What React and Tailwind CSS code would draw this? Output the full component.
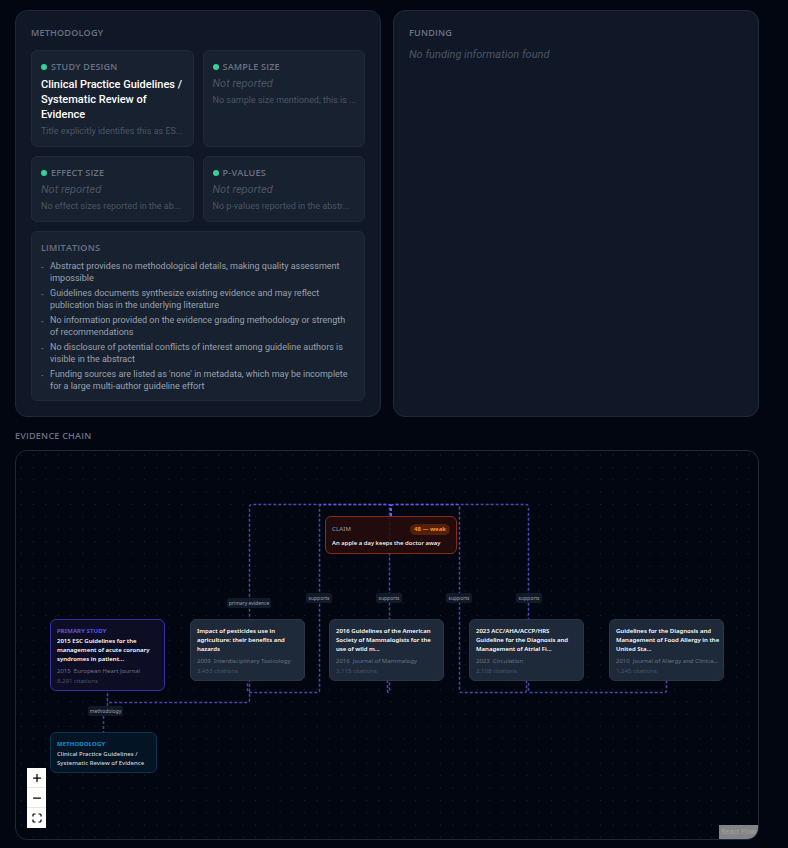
import { Plus, Minus } from "lucide-react";

const stats = [
  { label: "STUDY DESIGN", value: "Clinical Practice Guidelines / Systematic Review of Evidence", note: "Title explicitly identifies this as ES..." },
  { label: "SAMPLE SIZE", note: "No sample size mentioned; this is ..." },
  { label: "EFFECT SIZE", note: "No effect sizes reported in the ab..." },
  { label: "P-VALUES", note: "No p-values reported in the abstr..." },
];

const limitations = [
  "Abstract provides no methodological details, making quality assessment impossible",
  "Guidelines documents synthesize existing evidence and may reflect publication bias in the underlying literature",
  "No information provided on the evidence grading methodology or strength of recommendations",
  "No disclosure of potential conflicts of interest among guideline authors is visible in the abstract",
  "Funding sources are listed as 'none' in metadata, which may be incomplete for a large multi-author guideline effort",
];

const papers = [
  { place: "left-[174px]", title: "Impact of pesticides use in\nagriculture: their benefits and\nhazards", year: "2009", journal: "Interdisciplinary Toxicology", cites: "3,453" },
  { place: "left-[313px]", title: "2016 Guidelines of the American\nSociety of Mammalogists for the\nuse of wild m...", year: "2016", journal: "Journal of Mammalogy", cites: "3,115" },
  { place: "left-[453px]", title: "2023 ACC/AHA/ACCP/HRS\nGuideline for the Diagnosis and\nManagement of Atrial Fi...", year: "2023", journal: "Circulation", cites: "2,108" },
  { place: "left-[593px]", title: "Guidelines for the Diagnosis and\nManagement of Food Allergy in the\nUnited Sta...", year: "2010", journal: "Journal of Allergy and Clinica...", cites: "1,245" },
];

const edgeLabels = [
  { text: "primary evidence", place: "left-[211px] top-[147px] w-[44px]" },
  { text: "supports", place: "left-[290px] top-[142px] w-[26px]" },
  { text: "supports", place: "left-[360px] top-[142px] w-[26px]" },
  { text: "supports", place: "left-[430px] top-[142px] w-[26px]" },
  { text: "supports", place: "left-[500px] top-[142px] w-[26px]" },
  { text: "methodology", place: "left-[72px] top-[255px] w-[35px]" },
];

function Heading({ children }) {
  return <h2 className="font-['Open_Sans',sans-serif] text-[9px] leading-[13px] font-semibold tracking-wide text-gray-500">{children}</h2>;
}

function Stat({ label, value, note }) {
  return (
    <div className="min-w-0 rounded-md border border-gray-800 bg-[#18212f] px-[9px] pt-[9px] pb-2">
      <div className="flex items-center gap-1">
        <span className="size-[6px] rounded-full bg-[#34d399]" />
        <Heading>{label}</Heading>
      </div>
      {value ? (
        <p className="mt-1 text-[11px] leading-[15px] font-medium text-white">{value}</p>
      ) : (
        <p className="mt-1 text-[11px] leading-[14px] text-gray-600 italic">Not reported</p>
      )}
      <p className="mt-[3px] text-[9px] leading-[13px] whitespace-nowrap text-gray-600">{note}</p>
    </div>
  );
}

function Edges() {
  return (
    <svg className="absolute inset-0 size-full" fill="none">
      <defs>
        <pattern id="dots" x="-1" y="-2" width="12.33" height="12.33" patternUnits="userSpaceOnUse">
          <circle cx="6.2" cy="6.2" r="0.5" fill="#29313f" />
        </pattern>
      </defs>
      <rect width="100%" height="100%" fill="url(#dots)" />
      <g stroke="#6366f1" strokeOpacity="0.7" strokeWidth="1.5" strokeDasharray="3 2">
        <path d="M375 65V56Q375 53.500 372 53.500H236Q233.500 53.500 233.500 56V249Q233.500 251.500 231 251.500H94Q91.500 251.500 91.500 249V240" />
        <path d="M375 65V56Q375 53.500 372 53.500H306Q303.500 53.500 303.500 56V239Q303.500 241.500 301 241.500H234Q231.500 241.500 231.500 239V230" />
        <path d="M375 65V56Q375 53.500 374 53.500Q373.500 53.500 373.500 55V240Q373.500 241.500 372.500 241.500Q371.500 241.500 371.500 240V230" />
        <path d="M375 65V56Q375 53.500 378 53.500H441Q443.500 53.500 443.500 56V239Q443.500 241.500 446 241.500H508Q510.500 241.500 510.500 239V230" />
        <path d="M375 65V56Q375 53.500 378 53.500H510Q512.500 53.500 512.500 56V239Q512.500 241.500 515 241.500H648Q650.500 241.500 650.500 239V230" />
      </g>
      <path d="M91.500 252V257Q91.500 260 89 260Q87.500 260 87.500 263V281" stroke="#1d5580" strokeWidth="1.5" strokeDasharray="3 2" />
    </svg>
  );
}

function Meta({ year, journal, cites }) {
  return (
    <>
      <p className="mt-[3px] text-[6px] leading-[9px] whitespace-nowrap text-gray-500">
        {year}&nbsp; {journal}
      </p>
      <p className="mt-px text-[6px] leading-[9px] text-gray-600">{cites} citations</p>
    </>
  );
}

const controlButton = "flex h-[20px] w-full items-center justify-center bg-white text-black";

export default function App() {
  return (
    <main className="min-h-screen bg-[#020610] pt-[10px] pr-[29px] pb-2 pl-[15px] font-['Roboto',sans-serif]">
      <div className="grid grid-cols-2 gap-3">
        <section className="rounded-xl border border-gray-800 bg-gray-900 p-[15px]">
          <Heading>METHODOLOGY</Heading>
          <div className="mt-[11px] grid grid-cols-2 gap-[9px]">
            {stats.map((s) => (
              <Stat key={s.label} {...s} />
            ))}
            <div className="col-span-2 rounded-md border border-gray-800 bg-[#18212f] px-[9px] pt-[9px] pb-2">
              <Heading>LIMITATIONS</Heading>
              <ul className="mt-[6px] space-y-[3px] text-[9px] leading-[12px] text-gray-400">
                {limitations.map((l) => (
                  <li key={l} className="flex gap-[5px]">
                    <span className="mt-0.5 w-1 shrink-0 font-bold text-gray-500">·</span>
                    <span>{l}</span>
                  </li>
                ))}
              </ul>
            </div>
          </div>
        </section>
        <section className="rounded-xl border border-gray-800 bg-gray-900 p-[15px]">
          <Heading>FUNDING</Heading>
          <p className="mt-[9px] text-[11px] leading-[14px] text-gray-600 italic">No funding information found</p>
        </section>
      </div>

      <section className="mt-3">
        <Heading>EVIDENCE CHAIN</Heading>
        <div className="relative mt-2 h-[390px] overflow-hidden rounded-xl border border-gray-800 font-['Noto_Sans',sans-serif]">
          <Edges />

          {edgeLabels.map((e, i) => (
            <span key={i} className={`absolute h-[10px] rounded-xs bg-[#111a28] text-center text-[5px] leading-[10px] whitespace-nowrap text-gray-400 ${e.place}`}>
              {e.text}
            </span>
          ))}

          <article className="absolute top-[65px] left-[309px] w-[132px] rounded-md border border-[#8b2c12] bg-[#270d0c]/85 px-[6px] pt-[7px] pb-[5px]">
            <div className="flex items-center justify-between">
              <span className="text-[6px] leading-[11px] tracking-wide text-gray-400">CLAIM</span>
              <span className="rounded-full bg-[#541e0b] px-1 text-[6px] leading-[11px] font-bold text-[#f59331]">48 — weak</span>
            </div>
            <p className="mt-1 text-[6px] leading-[9px] font-medium text-white">An apple a day keeps the doctor away</p>
          </article>

          <article className="absolute top-[168px] left-[34px] w-[115px] rounded-md border border-[#3730a3] bg-[#0d0d26] px-[6px] pt-[7px] pb-1">
            <p className="text-[6px] leading-[9px] font-semibold tracking-wide text-indigo-500">PRIMARY STUDY</p>
            <p className="mt-px text-[6px] leading-[9px] font-semibold text-white">2015 ESC Guidelines for the management of acute coronary syndromes in patient...</p>
            <Meta year="2015" journal="European Heart Journal" cites="8,291" />
          </article>

          {papers.map((p) => (
            <article key={p.year} className={`absolute top-[168px] w-[115px] rounded-md border border-[#2c3645] bg-gray-800 pt-[7px] pr-[3px] pb-1 pl-[6px] ${p.place}`}>
              <p className="text-[6px] leading-[9px] font-semibold whitespace-pre-line text-white">{p.title}</p>
              <Meta {...p} />
            </article>
          ))}

          <article className="absolute top-[281px] left-[34px] w-[107px] rounded-md border border-[#0c3350] bg-[#031425] px-[6px] pt-[7px] pb-1">
            <p className="text-[6px] leading-[9px] font-semibold tracking-wide text-sky-500">METHODOLOGY</p>
            <p className="mt-px text-[6px] leading-[9px] font-medium text-gray-300">Clinical Practice Guidelines / Systematic Review of Evidence</p>
          </article>

          <div className="absolute bottom-[11px] left-[11px] w-[19px] divide-y divide-gray-200">
            <button aria-label="Zoom in" className={controlButton}>
              <Plus size={12} strokeWidth={2.5} />
            </button>
            <button aria-label="Zoom out" className={controlButton}>
              <Minus size={12} strokeWidth={2.5} />
            </button>
            <button aria-label="Fit view" className={controlButton}>
              <svg width="10" height="10" viewBox="0 0 10 10" fill="none" stroke="currentColor" strokeWidth="1.2">
                <path d="M1 3.500V2Q1 1 2 1H3.500M6.500 1H8Q9 1 9 2V3.500M9 6.500V8Q9 9 8 9H6.500M3.500 9H2Q1 9 1 8V6.500" />
              </svg>
            </button>
          </div>
          <a href="#attribution" className="absolute right-0 bottom-0 bg-[#838488] px-[2px] text-[7px] leading-[14px] text-[#a3a394]">
            React Flow
          </a>
        </div>
      </section>
    </main>
  );
}
